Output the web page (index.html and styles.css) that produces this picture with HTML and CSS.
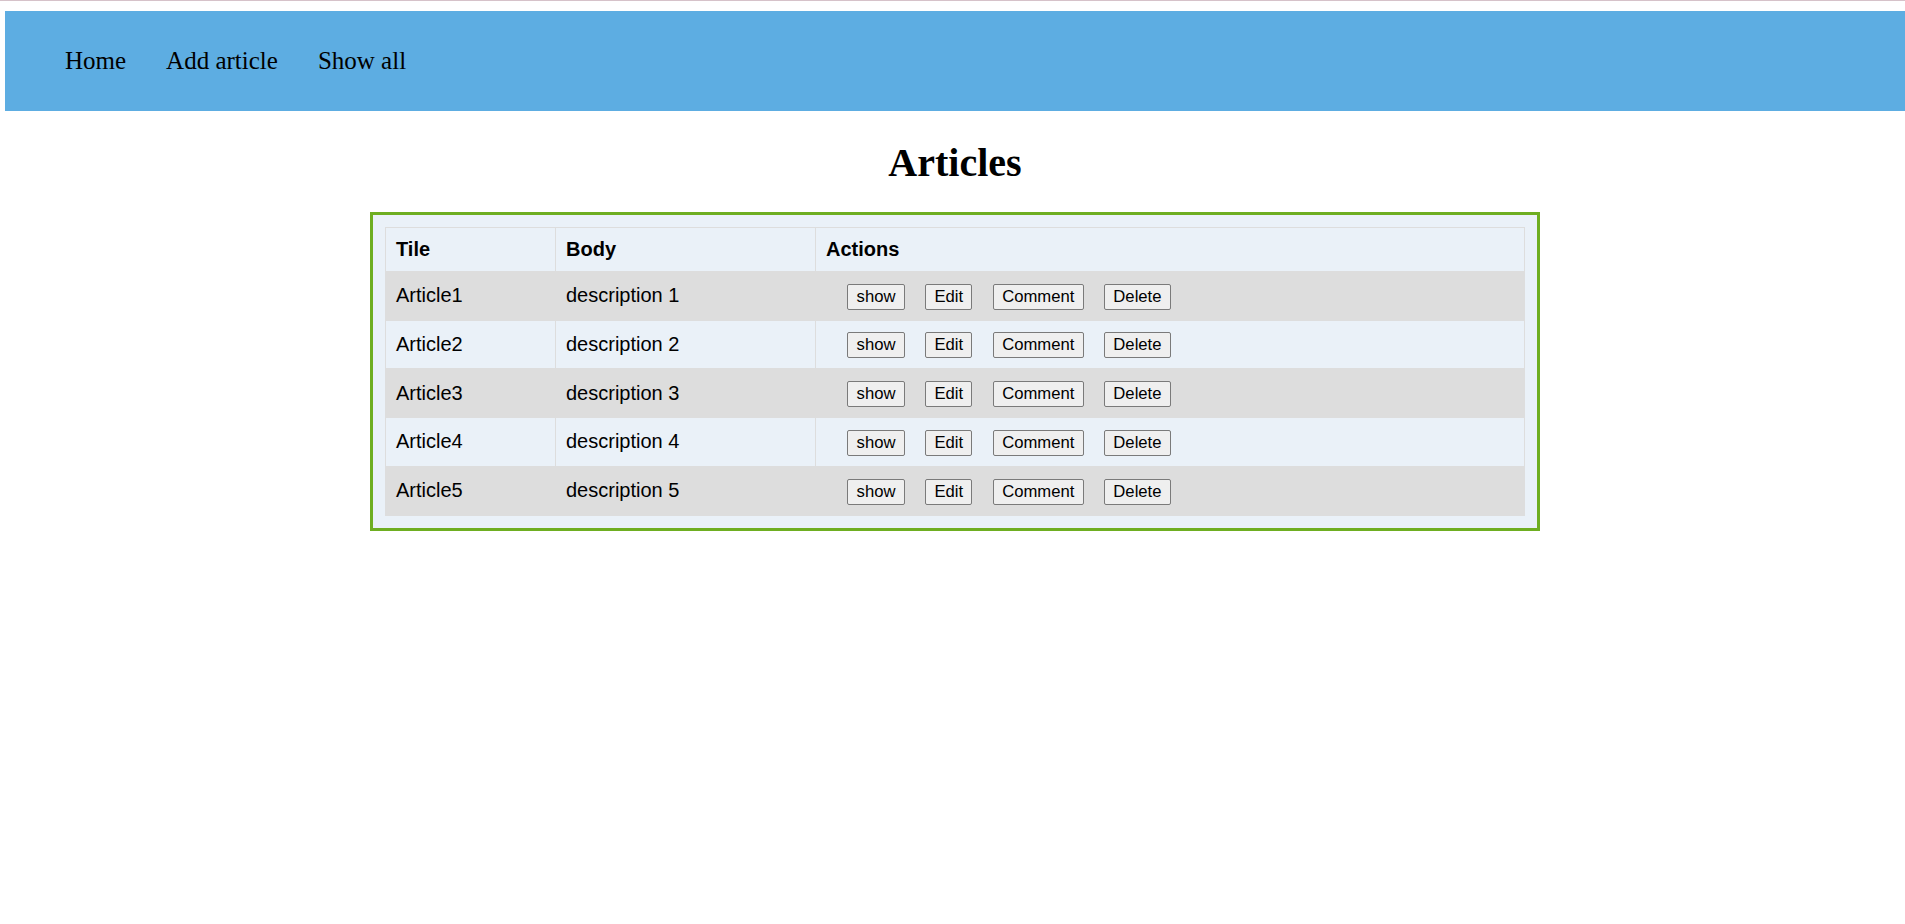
FILE: index.html
```html
<!DOCTYPE html>
<html lang="en">
<head>
<meta charset="utf-8">
<title>Articles</title>
<link rel="stylesheet" href="styles.css">
</head>
<body>
<nav class="topnav">
  <a class="navlink" href="#">Home</a>
  <a class="navlink" href="#">Add article</a>
  <a class="navlink" href="#">Show all</a>
</nav>
<h1 class="title">Articles</h1>
<div class="box">
  <table class="articles">
    <colgroup><col class="c1"><col class="c2"><col class="c3"></colgroup>
    <thead>
      <tr><th>Tile</th><th>Body</th><th>Actions</th></tr>
    </thead>
    <tbody>
      <tr><td>Article1</td><td>description 1</td><td><div class="acts"><button class="btn">show</button><button class="btn">Edit</button><button class="btn">Comment</button><button class="btn">Delete</button></div></td></tr>
      <tr><td>Article2</td><td>description 2</td><td><div class="acts"><button class="btn">show</button><button class="btn">Edit</button><button class="btn">Comment</button><button class="btn">Delete</button></div></td></tr>
      <tr><td>Article3</td><td>description 3</td><td><div class="acts"><button class="btn">show</button><button class="btn">Edit</button><button class="btn">Comment</button><button class="btn">Delete</button></div></td></tr>
      <tr><td>Article4</td><td>description 4</td><td><div class="acts"><button class="btn">show</button><button class="btn">Edit</button><button class="btn">Comment</button><button class="btn">Delete</button></div></td></tr>
      <tr><td>Article5</td><td>description 5</td><td><div class="acts"><button class="btn">show</button><button class="btn">Edit</button><button class="btn">Comment</button><button class="btn">Delete</button></div></td></tr>
    </tbody>
  </table>
</div>
</body>
</html>
```

FILE: styles.css
```css
html {
  border-top: 1px solid #d6c2c9;
  background: #ffffff;
}
body {
  margin: 10px 0 0 5px;
  font-family: "Liberation Serif", "Times New Roman", serif;
  color: #000;
}
.topnav {
  display: flex;
  align-items: center;
  gap: 40px;
  height: 100px;
  padding-left: 60px;
  background: #5dade2;
}
.navlink {
  font-family: "Liberation Serif", "Times New Roman", serif;
  font-size: 25px;
  color: #000;
  text-decoration: none;
}
.title {
  margin: 27.5px 0 26.3px;
  text-align: center;
  font-family: "Liberation Serif", "Times New Roman", serif;
  font-weight: bold;
  font-size: 40px;
}
.box {
  width: 1140px;
  margin: 0 auto;
  padding: 12px;
  border: 3px solid #6eae21;
  background: #eaf1f8;
}
.articles {
  width: 100%;
  border-collapse: collapse;
  table-layout: fixed;
  font-family: "Liberation Sans", Arial, sans-serif;
  font-size: 20px;
}
.c1 { width: 170px; }
.c2 { width: 260px; }
.articles th,
.articles td {
  border: 1px solid #dddddd;
  padding: 10px;
  text-align: left;
  vertical-align: middle;
}
.articles th {
  font-weight: bold;
}
.articles tbody tr:nth-child(odd) {
  background: #dddddd;
}
.acts {
  display: flex;
  align-items: flex-end;
  gap: 20.4px;
  height: 27.75px;
  padding-left: 21.3px;
}
.btn {
  box-sizing: border-box;
  height: 26px;
  padding: 0 8.3px;
  border: 1px solid #7a7a7a;
  border-radius: 2px;
  background: #efefef;
  font-family: "Liberation Sans", Arial, sans-serif;
  font-size: 16.67px;
  color: #000;
}
```
